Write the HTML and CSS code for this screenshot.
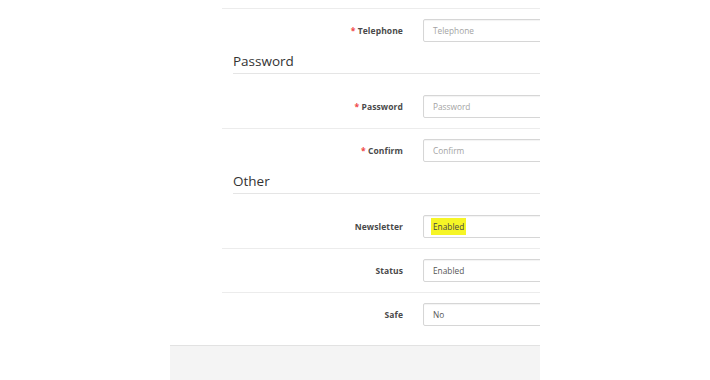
FILE: index.html
```html
<!DOCTYPE html>
<html>
<head>
<meta charset="utf-8">
<link rel="stylesheet" href="styles.css">
</head>
<body>
<div class="page">
  <div class="form">
    <div class="group first">
      <label class="label"><span class="req">*</span> Telephone</label>
      <div class="field placeholder">Telephone</div>
    </div>
    <div class="legend">Password</div>
    <div class="group nob">
      <label class="label"><span class="req">*</span> Password</label>
      <div class="field placeholder">Password</div>
    </div>
    <div class="group">
      <label class="label"><span class="req">*</span> Confirm</label>
      <div class="field placeholder">Confirm</div>
    </div>
    <div class="legend">Other</div>
    <div class="group nob">
      <label class="label">Newsletter</label>
      <div class="field value"><span class="hl">Enabled</span></div>
    </div>
    <div class="group">
      <label class="label">Status</label>
      <div class="field value">Enabled</div>
    </div>
    <div class="group">
      <label class="label">Safe</label>
      <div class="field value">No</div>
    </div>
  </div>
  <div class="footer"></div>
</div>
</body>
</html>
```
FILE: styles.css
```css
html, body {
  margin: 0;
  padding: 0;
  background: #ffffff;
}
body {
  font-family: "Open Sans", "DejaVu Sans", sans-serif;
  width: 710px;
  height: 380px;
  overflow: hidden;
}
.page {
  margin-left: 170px;
  width: 370px;
  height: 380px;
  overflow: hidden;
  display: flex;
  flex-direction: column;
}
.form {
  padding-left: 52px;
  padding-top: 8px;
  padding-bottom: 9px;
}
.group {
  display: flex;
  align-items: center;
  border-top: 1px solid #ececec;
  padding: 10px 0;
}
.group.nob {
  border-top: none;
  margin-top: 11px;
}
.label {
  flex: none;
  width: 181px;
  text-align: right;
  font-size: 8.5px;
  font-weight: 700;
  color: #4a4a4a;
  letter-spacing: 0.1px;
}
.req {
  color: #f04848;
}
.field {
  margin-left: 20px;
  width: 160px;
  flex: none;
  height: 23px;
  box-sizing: border-box;
  border: 1px solid #d6d6d6;
  border-radius: 2px;
  box-shadow: inset 0 1px 1px rgba(0,0,0,0.05);
  padding-left: 9px;
  display: flex;
  align-items: center;
  font-size: 8.3px;
}
.placeholder {
  color: #a3a3a3;
}
.value {
  color: #555;
}
.hl {
  background: #f6f526;
  color: #444;
  padding: 3px 2px;
  margin-left: -2px;
}
.legend {
  margin-left: 11px;
  height: 21px;
  line-height: 18px;
  font-size: 13.5px;
  color: #333;
  border-bottom: 1px solid #e5e5e5;
}
.footer {
  flex: 1;
  background: #f4f4f4;
  border-top: 1px solid #e2e2e2;
}
```
